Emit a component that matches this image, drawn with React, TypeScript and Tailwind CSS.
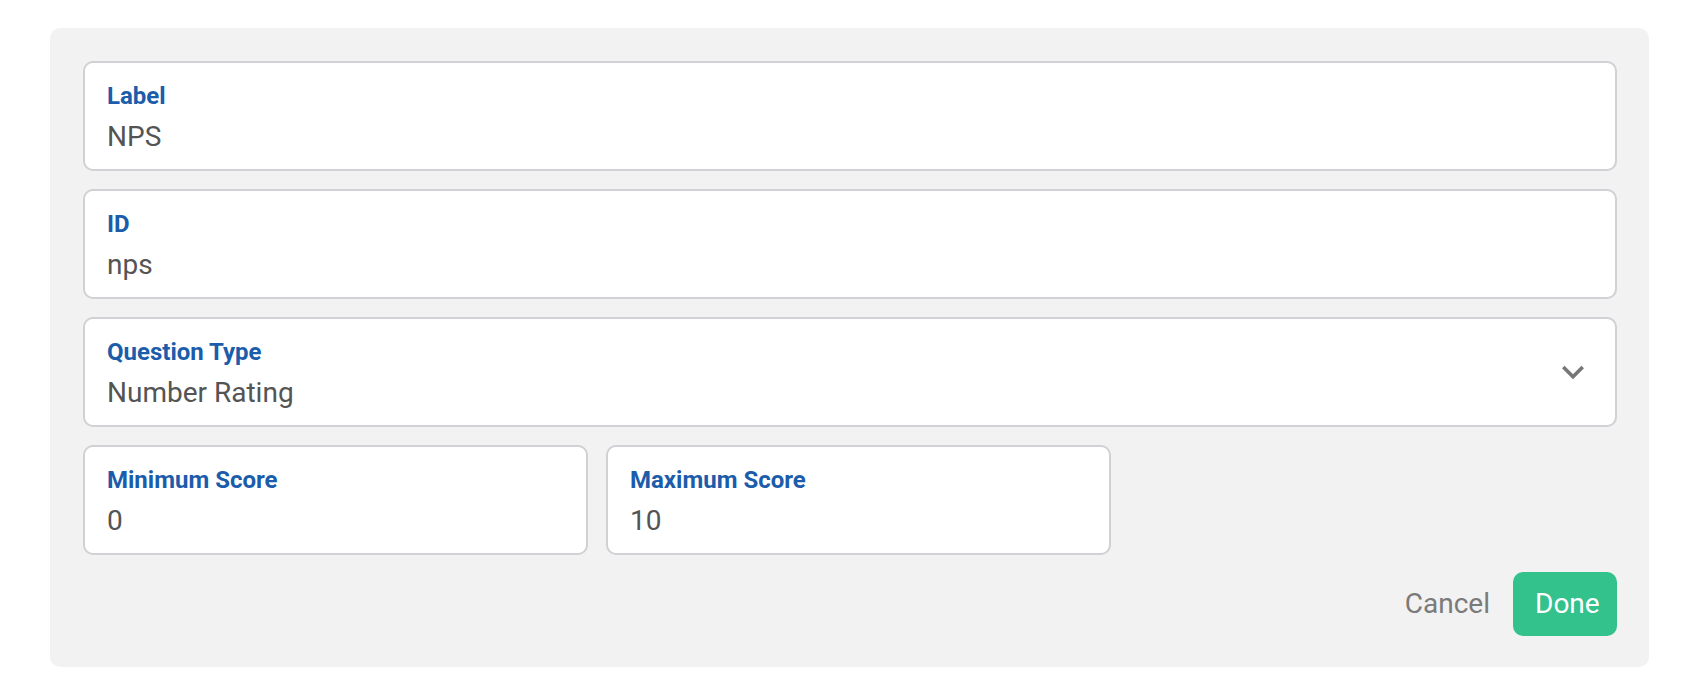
import React from "react";

function Field({ label, value, className = "", chevron = false }: { label: string; value: string; className?: string; chevron?: boolean }) {
  return (
    <div className={`relative h-[110px] rounded-[10px] border-2 border-[#d0d0d5] bg-white pl-[22px] pr-[20px] pt-[19px] flex ${className}`}>
      <div className="flex-1 flex flex-col">
        <div className="text-[24px] leading-[28px] font-bold text-[#1b5cab]">{label}</div>
        <div className="mt-[9px] text-[28px] leading-[36px] text-[#545454]">{value}</div>
      </div>
      {chevron && (
        <div className="self-center -mt-[19px] flex items-center">
          <svg width="44" height="44" viewBox="0 0 24 24" fill="#777777">
            <path d="M16.59 8.59L12 13.17 7.41 8.59 6 10l6 6 6-6z" />
          </svg>
        </div>
      )}
    </div>
  );
}

export default function App() {
  return (
    <div className="w-[1700px] h-[696px] bg-white pt-[28px] pl-[50px]" style={{ fontFamily: "Roboto, 'Liberation Sans', sans-serif" }}>
      <div className="w-[1599px] h-[639px] rounded-[10px] bg-[#f2f2f2] pt-[33px] pl-[33px] pr-[32px] flex flex-col">
        <div className="flex flex-col gap-[18px]">
          <Field label="Label" value="NPS" />
          <Field label="ID" value="nps" />
          <Field label="Question Type" value="Number Rating" chevron />
          <div className="flex gap-[18px]">
            <Field label="Minimum Score" value="0" className="w-[505px]" />
            <Field label="Maximum Score" value="10" className="w-[505px]" />
          </div>
        </div>
        <div className="mt-[17px] flex justify-end items-center">
          <span className="text-[28px] text-[#7a7a7a] mr-[23px]">Cancel</span>
          <button className="w-[104px] h-[64px] rounded-[10px] bg-[#33c18c] text-white text-[28px] flex items-center pl-[22px]">Done</button>
        </div>
      </div>
    </div>
  );
}
